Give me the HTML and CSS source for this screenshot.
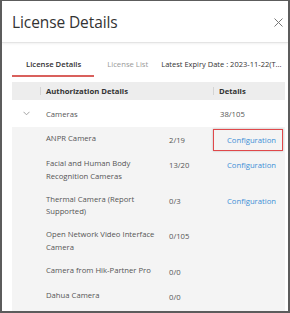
FILE: index.html
```html
<!DOCTYPE html>
<html>
<head>
<meta charset="utf-8">
<link rel="stylesheet" href="styles.css">
</head>
<body>
<div class="dialog">
  <div class="header">
    <span class="title">License Details</span>
    <svg class="close" width="9" height="9" viewBox="0 0 9 9"><path d="M0.5 0.5L8.5 8.5M8.5 0.5L0.5 8.5" stroke="#777" stroke-width="1" fill="none"/></svg>
  </div>
  <div class="body">
    <div class="tabs">
      <div class="tab active">License Details</div>
      <div class="tab">License List</div>
      <div class="tab info">Latest Expiry Date : 2023-11-22(T...</div>
    </div>
    <div class="table">
      <div class="thead">
        <div class="c-exp"></div>
        <div class="c-name th">Authorization Details</div>
        <div class="c-det th">Details</div>
      </div>
      <div class="group">
        <div class="c-exp"><svg width="7" height="5" viewBox="0 0 7 5"><path d="M0.5 0.8L3.5 3.8L6.5 0.8" stroke="#999" stroke-width="0.9" fill="none"/></svg></div>
        <div class="c-name">Cameras</div>
        <div class="c-det">38/105</div>
      </div>
      <div class="rows">
        <div class="row">
          <div class="name">ANPR Camera</div>
          <div class="count">2/19</div>
          <div class="act highlight"><span class="link">Configuration</span></div>
        </div>
        <div class="row">
          <div class="name">Facial and Human Body Recognition Cameras</div>
          <div class="count">13/20</div>
          <div class="act"><span class="link">Configuration</span></div>
        </div>
        <div class="row">
          <div class="name">Thermal Camera (Report Supported)</div>
          <div class="count">0/3</div>
          <div class="act"><span class="link">Configuration</span></div>
        </div>
        <div class="row">
          <div class="name">Open Network Video Interface Camera</div>
          <div class="count">0/105</div>
          <div class="act"></div>
        </div>
        <div class="row">
          <div class="name">Camera from Hik-Partner Pro</div>
          <div class="count">0/0</div>
          <div class="act"></div>
        </div>
        <div class="row">
          <div class="name">Dahua Camera</div>
          <div class="count">0/0</div>
          <div class="act"></div>
        </div>
      </div>
    </div>
  </div>
</div>
</body>
</html>
```

FILE: styles.css
```css
html, body {
  margin: 0;
  padding: 0;
  background: #ffffff;
}
body {
  font-family: "Open Sans", "Segoe UI", sans-serif;
  color: #444;
}
.dialog {
  box-sizing: border-box;
  width: 290px;
  height: 313px;
  border: 2px solid #5c5c5c;
  border-top-width: 1px;
  background: #fff;
  overflow: hidden;
  display: flex;
  flex-direction: column;
}
.header {
  height: 41px;
  flex: none;
  display: flex;
  align-items: center;
  justify-content: space-between;
  padding: 0 5px 0 10px;
  border-bottom: 1px solid #e4e4e4;
  box-shadow: 0 1px 2px rgba(0,0,0,0.06);
}
.title {
  font-size: 15.5px;
  color: #333;
  letter-spacing: -0.1px;
}
.close {
  margin-top: 1px;
}
.body {
  flex: 1;
  padding: 0 3px 0 10px;
  display: flex;
  flex-direction: column;
  min-height: 0;
}
.tabs {
  display: flex;
  height: 33px;
  flex: none;
  align-items: stretch;
  font-size: 7.7px;
  margin-top: 1px;
}
.tab {
  padding: 8px 13px 0 13px;
  display: flex;
  align-items: center;
  color: #999;
  white-space: nowrap;
  border-bottom: 2px solid transparent;
}
.tab.active {
  color: #333;
  font-weight: 600;
  border-bottom-color: #d9605c;
  padding: 8px 13px 0 14px;
}
.tab.info {
  color: #333;
  padding-right: 0;
  padding-left: 0;
  font-size: 7.5px;
  overflow: hidden;
  flex: 1;
  min-width: 0;
}
.table {
  margin-top: 5px;
  flex: 1;
  display: flex;
  flex-direction: column;
  font-size: 7.7px;
}
.thead, .group {
  display: grid;
  grid-template-columns: 28px 173px 1fr;
  align-items: center;
}
.thead {
  height: 18px;
  flex: none;
  background: #ededed;
  font-weight: 700;
  color: #333;
}
.th {
  position: relative;
  padding-left: 6px;
}
.th::before {
  content: "";
  position: absolute;
  left: 0;
  top: 1px;
  bottom: 1px;
  width: 1px;
  background: #d4d4d4;
}
.group {
  height: 27px;
  flex: none;
  background: #fff;
  color: #555;
}
.group .c-name {
  padding-left: 6px;
}
.group .c-det {
  padding-left: 7px;
}
.group .c-exp {
  display: flex;
  justify-content: flex-end;
  padding-right: 10px;
}
.rows {
  flex: 1;
  background: #f4f4f4;
}
.row {
  display: grid;
  grid-template-columns: 34px 123px 44px 1fr;
  line-height: 12.5px;
  padding: 5px 0 5.5px 0;
  color: #555;
}
.name {
  grid-column: 2;
  padding-right: 10px;
}
.count {
  padding-top: 2px;
}
.act {
  padding-top: 2px;
  padding-left: 14px;
  position: relative;
}
.link {
  color: #3c8fd6;
}
.highlight::after {
  content: "";
  position: absolute;
  left: 0;
  right: 2px;
  top: -3px;
  bottom: -4px;
  border: 1.5px solid #e0484a;
  box-shadow: 0 0 2px rgba(0,0,0,0.25);
}
```
